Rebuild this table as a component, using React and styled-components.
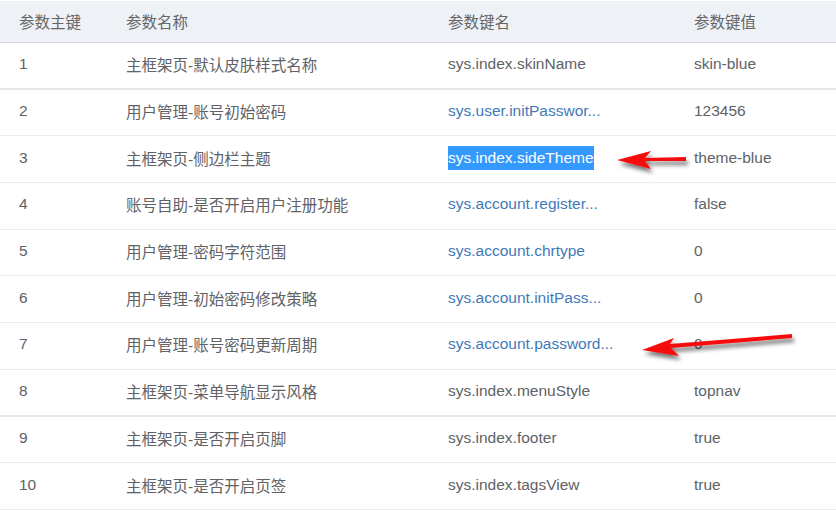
import React from 'react';
import styled, {createGlobalStyle} from 'styled-components';

const GlobalStyle = createGlobalStyle`
    body {
        margin: 0;
        background: #fff;
        font-family: "Liberation Sans", "Noto Sans CJK SC", sans-serif;
    }
`

const Wrap = styled.div`
    position: relative;
    width: 836px;
    height: 515px;
    overflow: hidden;
`

const Table = styled.table`
    width: 836px;
    border-collapse: collapse;
    table-layout: fixed;
    font-size: 15.5px;
    color: #606266;
`

const HeadCell = styled.th`
    height: 40px;
    padding: 0 0 1px 19px;
    text-align: left;
    font-weight: normal;
    color: #666;
    background: #eef1f6;
    border-bottom: 1px solid #d3d6db;
    border-top: 1px solid #fff;
`

const Row = styled.tr`
    border-bottom: ${props => props.thick ? '2px solid #e4e7ec' : '1px solid #ebeef3'};
`

const Cell = styled.td`
    height: ${props => props.thick ? '41.7px' : '42.7px'};
    padding: 0 0 3px 19px;
    white-space: nowrap;
    overflow: hidden;
    color: ${props => props.link ? '#3f7ab8' : '#606266'};
`

const Picked = styled.span`
    background: #3399ff;
    color: #fff;
    padding: 3px 0 4px;
`

const Overlay = styled.svg`
    position: absolute;
    left: 0;
    top: 0;
    pointer-events: none;
`

const rows = [
    {id: 1, name: '主框架页-默认皮肤样式名称', key: 'sys.index.skinName', value: 'skin-blue', thick: true},
    {id: 2, name: '用户管理-账号初始密码', key: 'sys.user.initPasswor...', value: '123456', link: true},
    {id: 3, name: '主框架页-侧边栏主题', key: 'sys.index.sideTheme', value: 'theme-blue', picked: true},
    {id: 4, name: '账号自助-是否开启用户注册功能', key: 'sys.account.register...', value: 'false', link: true},
    {id: 5, name: '用户管理-密码字符范围', key: 'sys.account.chrtype', value: '0', link: true},
    {id: 6, name: '用户管理-初始密码修改策略', key: 'sys.account.initPass...', value: '0', link: true},
    {id: 7, name: '用户管理-账号密码更新周期', key: 'sys.account.password...', value: '0', link: true},
    {id: 8, name: '主框架页-菜单导航显示风格', key: 'sys.index.menuStyle', value: 'topnav', thick: true},
    {id: 9, name: '主框架页-是否开启页脚', key: 'sys.index.footer', value: 'true'},
    {id: 10, name: '主框架页-是否开启页签', key: 'sys.index.tagsView', value: 'true'},
]

function Arrows() {
    return (
        <Overlay width="836" height="515">
            <defs>
                <filter id="shade" x="-20%" y="-50%" width="140%" height="220%">
                    <feGaussianBlur in="SourceAlpha" stdDeviation="2.2" />
                    <feOffset dx="2" dy="4" result="b" />
                    <feComponentTransfer><feFuncA type="linear" slope="0.55" /></feComponentTransfer>
                    <feMerge><feMergeNode /><feMergeNode in="SourceGraphic" /></feMerge>
                </filter>
            </defs>
            <g filter="url(#shade)" fill="#f50d0d">
                <path d="M617 160 L651 151 L645 158 L686 157 L686 161 L645 161 L651 169 Z" />
                <path d="M642 350 L674 338 L670 344 L792 334 L792 338 L671 348 L679 356 Z" />
            </g>
        </Overlay>
    );
}

export default function App() {
    return (
        <Wrap>
            <GlobalStyle />
            <Table>
                <colgroup>
                    <col style={{width: 107}} />
                    <col style={{width: 322}} />
                    <col style={{width: 246}} />
                    <col style={{width: 161}} />
                </colgroup>
                <thead>
                    <tr>
                        <HeadCell>参数主键</HeadCell>
                        <HeadCell>参数名称</HeadCell>
                        <HeadCell>参数键名</HeadCell>
                        <HeadCell>参数键值</HeadCell>
                    </tr>
                </thead>
                <tbody>
                    {rows.map(r =>
                        <Row key={r.id} thick={r.thick}>
                            <Cell thick={r.thick}>{r.id}</Cell>
                            <Cell thick={r.thick}>{r.name}</Cell>
                            <Cell thick={r.thick} link={r.link}>{r.picked ? <Picked>{r.key}</Picked> : r.key}</Cell>
                            <Cell thick={r.thick}>{r.value}</Cell>
                        </Row>
                    )}
                </tbody>
            </Table>
            <Arrows />
        </Wrap>
    );
}
